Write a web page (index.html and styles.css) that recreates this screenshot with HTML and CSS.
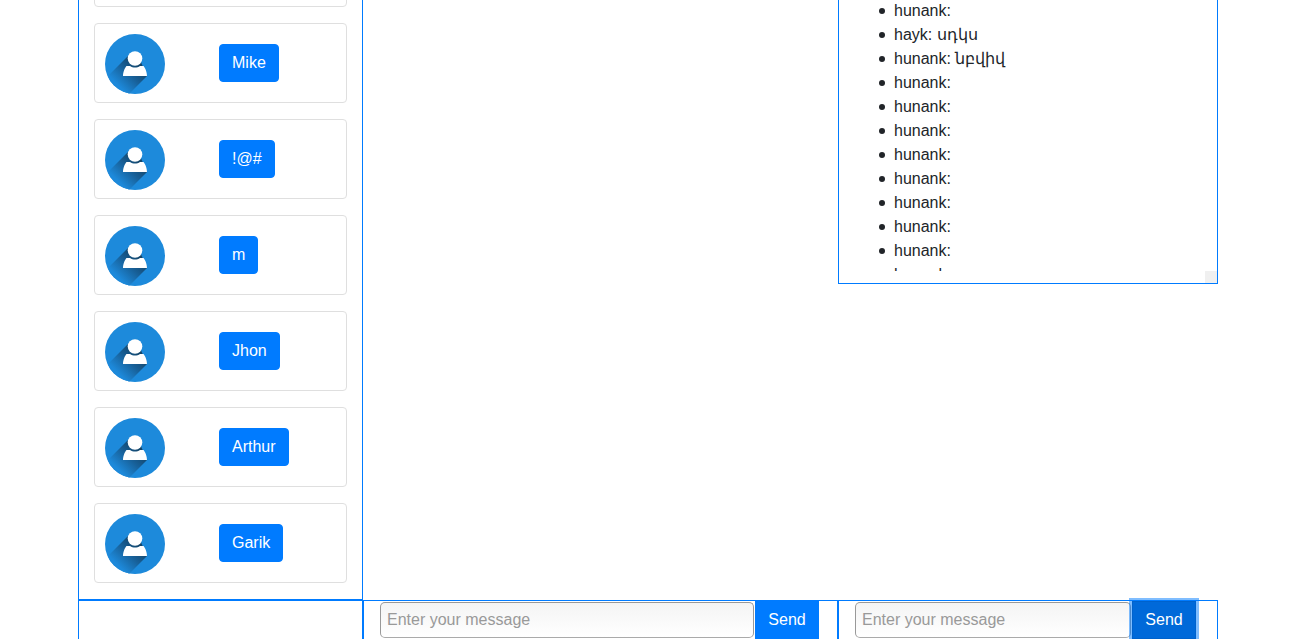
FILE: index.html
```html
<!DOCTYPE html>
<html lang="en">
<head>
<meta charset="utf-8">
<title>Chat</title>
<link rel="stylesheet" href="styles.css">
</head>
<body>
<svg class="sprite" aria-hidden="true">
  <defs>
    <linearGradient id="shade" gradientUnits="userSpaceOnUse" x1="34" y1="30" x2="13" y2="51">
      <stop offset="0" stop-color="#134468"/>
      <stop offset="0.45" stop-color="#175f97"/>
      <stop offset="1" stop-color="#1d89da"/>
    </linearGradient>
    <clipPath id="disc"><circle cx="30" cy="30" r="30"/></clipPath>
    <symbol id="avatar" viewBox="0 0 60 60">
      <circle cx="30" cy="30" r="30" fill="#1d8adb"/>
      <path d="M25 20L0 45V60H24L42 42L35 26Z" fill="url(#shade)" clip-path="url(#disc)"/>
      <path d="M18 42C18 38 20 33.500 21.500 32H25C28 34 32 34 35 32H38.500C40 33.500 42 38 42 42Z" fill="#fff"/>
      <ellipse cx="30" cy="24.500" rx="7.300" ry="7.300" fill="#fff"/>
    </symbol>
  </defs>
</svg>
<main class="container">
  <section class="row">
    <aside class="col users">
      <div class="card"><svg class="avatar"><use href="#avatar"/></svg></div>
      <div class="card"><svg class="avatar"><use href="#avatar"/></svg><button class="btn">Mike</button></div>
      <div class="card"><svg class="avatar"><use href="#avatar"/></svg><button class="btn">!@#</button></div>
      <div class="card"><svg class="avatar"><use href="#avatar"/></svg><button class="btn">m</button></div>
      <div class="card"><svg class="avatar"><use href="#avatar"/></svg><button class="btn">Jhon</button></div>
      <div class="card"><svg class="avatar"><use href="#avatar"/></svg><button class="btn">Arthur</button></div>
      <div class="card"><svg class="avatar"><use href="#avatar"/></svg><button class="btn">Garik</button></div>
    </aside>
    <div></div>
    <section class="col log">
      <ul class="messages">
        <li>hunank:</li>
        <li>hayk: սդկս</li>
        <li>hunank: նբվիվ</li>
        <li>hunank:</li>
        <li>hunank:</li>
        <li>hunank:</li>
        <li>hunank:</li>
        <li>hunank:</li>
        <li>hunank:</li>
        <li>hunank:</li>
        <li>hunank:</li>
        <li>hunank:</li>
      </ul>
      <div class="scroll-corner"></div>
    </section>
  </section>
  <section class="row row-send">
    <div class="col"></div>
    <form class="col send">
      <input class="field" type="text" placeholder="Enter your message" aria-label="Message to everyone">
      <button class="btn btn-square" type="button">Send</button>
    </form>
    <form class="col send send-room">
      <input class="field" type="text" placeholder="Enter your message" aria-label="Message to room">
      <button class="btn btn-square btn-focus" type="button">Send</button>
    </form>
  </section>
</main>
</body>
</html>
```
FILE: styles.css
```css
* { box-sizing: border-box; }

body {
  margin: 0;
  padding-right: 11px;
  height: 100vh;
  overflow: hidden;
  background: #fff;
  color: #212529;
  font: 16px/24px "Liberation Sans", Arial, sans-serif;
}

.sprite { position: absolute; width: 0; height: 0; }

.container {
  display: flex;
  flex-direction: column;
  max-width: 1140px;
  height: 100%;
  margin: 0 auto;
}

.row {
  display: grid;
  grid-template-columns: 3fr 5fr 4fr;
  align-items: start;
}

.row-send { flex: 1; align-items: stretch; }

.col { border: 1px solid #007bff; min-width: 0; }
.row-send .col { border-bottom: 0; }

.users {
  display: flex;
  flex-direction: column;
  gap: 16px;
  margin-top: -73px;
  padding: 0 15px 16px;
  border-top: 0;
}

.card {
  display: grid;
  grid-template-columns: 114px 1fr;
  align-items: center;
  justify-items: start;
  height: 80px;
  padding: 0 10px;
  border: 1px solid #dfdfdf;
  border-radius: 4px;
}

.avatar { display: block; width: 60px; height: 60px; margin-top: 2px; }

.btn {
  padding: 6px 12px;
  border: 1px solid #007bff;
  border-radius: 4px;
  background: #007bff;
  color: #fff;
  font: inherit;
}

.log { border-top: 0; }

.messages {
  height: 271px;
  margin: 0;
  padding: 0 15px 0 40px;
  overflow: hidden;
  list-style: none;
}

.messages li:first-child { margin-top: -1px; }

.messages li {
  display: flex;
  align-items: center;
  gap: 9px;
}

.messages li::before {
  content: "";
  width: 6px;
  height: 6px;
  border-radius: 50%;
  background: #212529;
}

.scroll-corner {
  width: 12px;
  height: 12px;
  margin-left: auto;
  background: #f0f0f0;
}

.send {
  display: flex;
  align-items: flex-start;
  padding: 0 18px 0 15px;
}

.send-room { padding-right: 21px; }

.field {
  flex: 1;
  min-width: 0;
  height: 36px;
  margin: 1px;
  padding: 0 6px;
  border: 1px solid #999;
  border-bottom-color: #aaa;
  border-radius: 5px;
  background: linear-gradient(#f4f4f4, #fff);
  font: inherit;
}

.field::placeholder { color: #999; opacity: 1; }

.btn-square { min-width: 64px; border-radius: 0; }

.btn-focus {
  border-color: #0062cc;
  background: #0069d9;
  box-shadow: 0 0 0 3px rgba(0, 123, 255, 0.5);
}
```
